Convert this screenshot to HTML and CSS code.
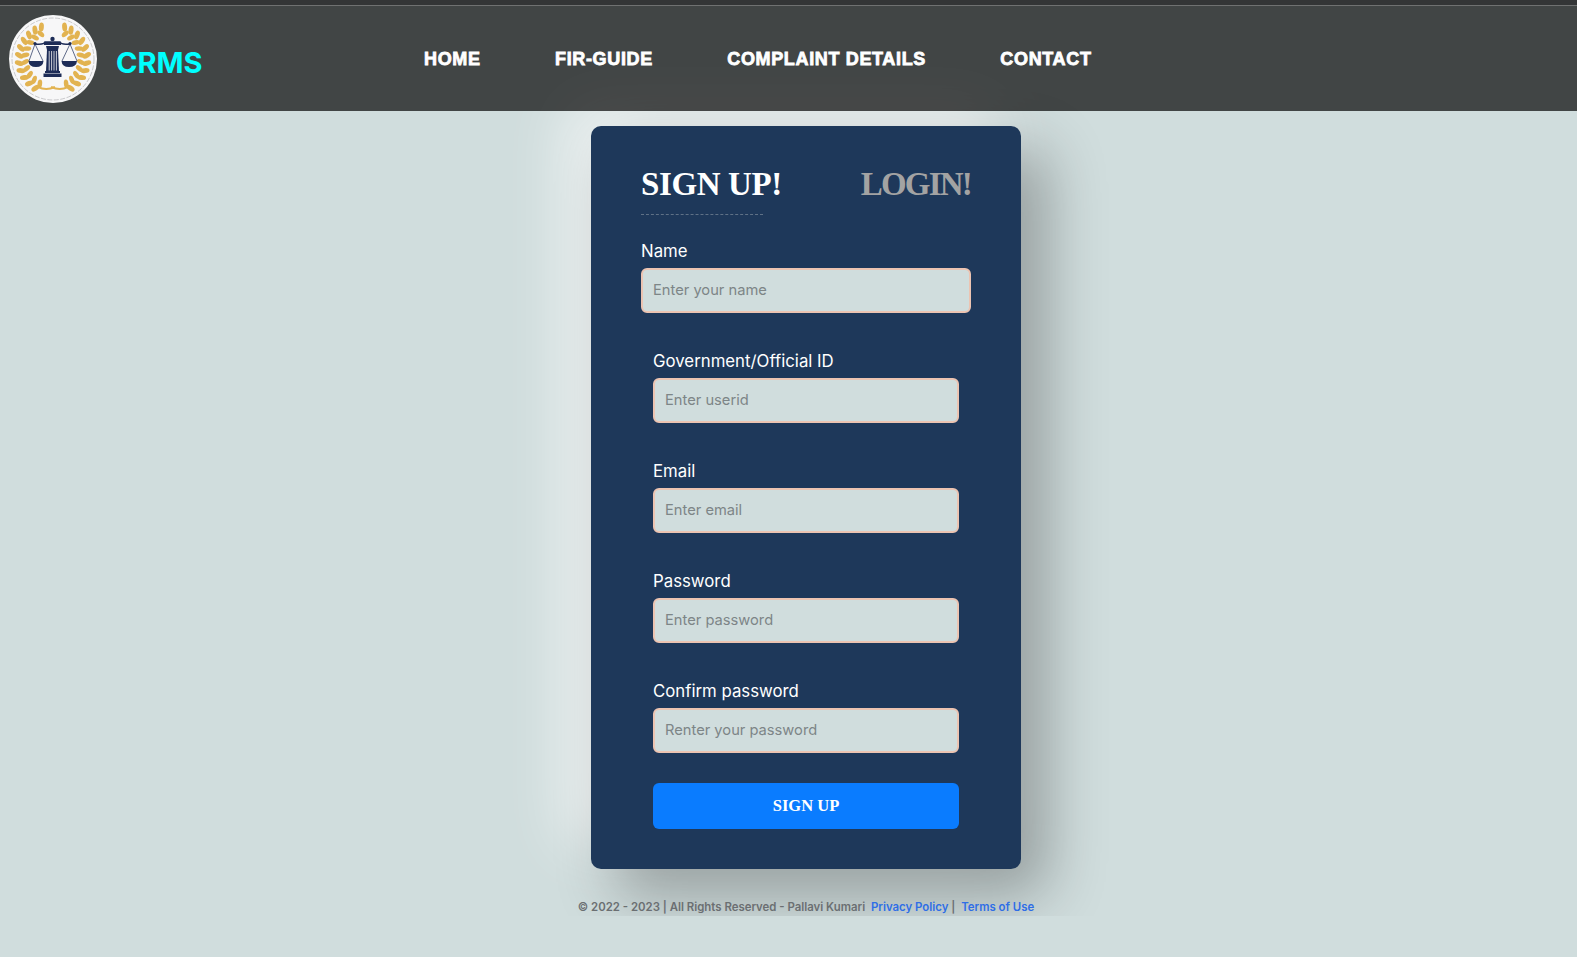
FILE: index.html
```html
<!DOCTYPE html>
<html lang="en">
<head>
<meta charset="utf-8">
<title>CRMS - Sign Up</title>
<link rel="stylesheet" href="styles.css">
</head>
<body>
<div class="top-strip"></div>
<header class="site-header">
  <a class="brand" href="#">
    <svg class="logo" viewBox="0 0 88 88" width="88" height="88" aria-label="CRMS logo">
      <defs>
        <g id="half-wreath" fill="#e2b351">
          <g>
            <ellipse cx="44" cy="10" rx="2.5" ry="4.6" transform="rotate(-20 44 44) rotate(25 44 10)"/>
            <ellipse cx="44" cy="10" rx="2.5" ry="4.6" transform="rotate(-32 44 44) rotate(25 44 10)"/>
            <ellipse cx="44" cy="10" rx="2.5" ry="4.6" transform="rotate(-45 44 44) rotate(25 44 10)"/>
            <ellipse cx="44" cy="10" rx="2.5" ry="4.6" transform="rotate(-58 44 44) rotate(25 44 10)"/>
            <ellipse cx="44" cy="10" rx="2.5" ry="4.6" transform="rotate(-71 44 44) rotate(25 44 10)"/>
            <ellipse cx="44" cy="10" rx="2.5" ry="4.6" transform="rotate(-84 44 44) rotate(25 44 10)"/>
            <ellipse cx="44" cy="10" rx="2.5" ry="4.6" transform="rotate(-97 44 44) rotate(25 44 10)"/>
            <ellipse cx="44" cy="10" rx="2.5" ry="4.6" transform="rotate(-110 44 44) rotate(25 44 10)"/>
            <ellipse cx="44" cy="10" rx="2.5" ry="4.6" transform="rotate(-123 44 44) rotate(25 44 10)"/>
            <ellipse cx="44" cy="10" rx="2.5" ry="4.6" transform="rotate(-136 44 44) rotate(25 44 10)"/>
            <ellipse cx="44" cy="10" rx="2.5" ry="4.6" transform="rotate(-149 44 44) rotate(25 44 10)"/>
          </g>
          <g>
            <ellipse cx="44" cy="16" rx="2.3" ry="4.2" transform="rotate(-26 44 44) rotate(-22 44 16)"/>
            <ellipse cx="44" cy="16" rx="2.3" ry="4.2" transform="rotate(-40 44 44) rotate(-22 44 16)"/>
            <ellipse cx="44" cy="16" rx="2.3" ry="4.2" transform="rotate(-54 44 44) rotate(-22 44 16)"/>
            <ellipse cx="44" cy="16" rx="2.3" ry="4.2" transform="rotate(-68 44 44) rotate(-22 44 16)"/>
            <ellipse cx="44" cy="16" rx="2.3" ry="4.2" transform="rotate(-82 44 44) rotate(-22 44 16)"/>
            <ellipse cx="44" cy="16" rx="2.3" ry="4.2" transform="rotate(-96 44 44) rotate(-22 44 16)"/>
            <ellipse cx="44" cy="16" rx="2.3" ry="4.2" transform="rotate(-110 44 44) rotate(-22 44 16)"/>
            <ellipse cx="44" cy="16" rx="2.3" ry="4.2" transform="rotate(-124 44 44) rotate(-22 44 16)"/>
            <ellipse cx="44" cy="16" rx="2.3" ry="4.2" transform="rotate(-138 44 44) rotate(-22 44 16)"/>
            <ellipse cx="44" cy="16" rx="2.3" ry="4.2" transform="rotate(-152 44 44) rotate(-22 44 16)"/>
          </g>
          <path d="M46 72 Q37 76 29 72" fill="none" stroke="#e2b351" stroke-width="2"/>
        </g>
      </defs>
      <circle cx="44" cy="44" r="44" fill="#f7f7f8"/>
      <circle cx="44" cy="44" r="41" fill="none" stroke="#a9a9ad" stroke-width=".6" stroke-dasharray="5 1.5"/>
      <use href="#half-wreath"/>
      <use href="#half-wreath" transform="matrix(-1 0 0 1 88 0)"/>
      <g fill="#1d2c57" stroke="#1d2c57">
        <path d="M26 29 Q35 30 36 27 H51 Q52 30 61 29" fill="none" stroke-width="1.6"/>
        <circle cx="43.5" cy="24" r="2.2" stroke="none"/>
        <circle cx="26" cy="28.5" r="1.6" stroke="none"/>
        <circle cx="61" cy="28.5" r="1.6" stroke="none"/>
        <path d="M35 27 H52 V30 H35 Z" stroke="none"/>
        <path d="M37 31 H50 L49 35 H38 Z" stroke="none"/>
        <path d="M38 35 H49 L50 56 H37 Z" stroke="none"/>
        <path d="M36 56 H51 V58 H36 Z M34.5 58.5 H52.5 V62 H34.5 Z" stroke="none"/>
        <path d="M26 29 L20 46 M26 29 L34 46 M61 29 L53 46 M61 29 L68 46" fill="none" stroke-width=".7"/>
        <path d="M19.5 46 H34.5 Q34 52 27 52 Q20 52 19.5 46 Z M52.5 46 H68 Q67.5 52 60 52 Q53 52 52.5 46 Z" stroke="none"/>
      </g>
      <g stroke="#f7f7f8" stroke-width=".8">
        <path d="M40.2 36 V55.5 M42.6 36 V55.5 M45 36 V55.5 M47.4 36 V55.5"/>
      </g>
    </svg>
    <span class="brand-name">CRMS</span>
  </a>
  <nav class="main-nav">
    <a href="#">HOME</a>
    <a href="#">FIR-GUIDE</a>
    <a href="#">COMPLAINT DETAILS</a>
    <a href="#">CONTACT</a>
  </nav>
</header>
<main class="page-main">
  <form class="auth-card">
    <div class="tabs">
      <h2 class="tab tab-active">SIGN UP!</h2>
      <h2 class="tab tab-muted">LOGIN!</h2>
    </div>
    <div class="tab-rule"></div>
    <div class="field">
      <label class="field-label" for="name">Name</label>
      <input class="field-input" id="name" type="text" placeholder="Enter your name">
    </div>
    <div class="field field-inset">
      <label class="field-label" for="userid">Government/Official ID</label>
      <input class="field-input" id="userid" type="text" placeholder="Enter userid">
    </div>
    <div class="field field-inset">
      <label class="field-label" for="email">Email</label>
      <input class="field-input" id="email" type="text" placeholder="Enter email">
    </div>
    <div class="field field-inset">
      <label class="field-label" for="password">Password</label>
      <input class="field-input" id="password" type="password" placeholder="Enter password">
    </div>
    <div class="field field-inset">
      <label class="field-label" for="confirm">Confirm password</label>
      <input class="field-input" id="confirm" type="password" placeholder="Renter your password">
    </div>
    <button class="submit-btn" type="button">SIGN UP</button>
  </form>
  <p class="legal">© 2022 - 2023 | All Rights Reserved - Pallavi Kumari <a href="#">Privacy Policy</a> | <a href="#">Terms of Use</a></p>
</main>
<div class="page-end"></div>
</body>
</html>
```
FILE: styles.css
```css
* { box-sizing: border-box; }
html, body { height: 100%; }
body {
  margin: 0;
  display: flex;
  flex-direction: column;
  overflow: hidden;
  background: #d0dddd;
  font-family: Inter, "Noto Sans", "Liberation Sans", sans-serif;
}
a { text-decoration: none; }

.top-strip { height: 5px; background: #333536; flex: none; position: relative; z-index: 3; }

.site-header {
  position: relative;
  z-index: 2;
  flex: none;
  height: 106px;
  display: flex;
  align-items: flex-start;
  background: rgba(0, 0, 0, .69);
  border-top: 1px solid #6f7171;
  padding: 9px 0 0 9px;
}
.brand { display: flex; align-items: center; width: 415px; flex: none; }
.logo { display: block; flex: none; }
.brand-name {
  margin: 7px 0 0 19px;
  color: #00ffff;
  font-size: 29px;
  font-weight: 700;
  line-height: 36px;
}
.main-nav { display: flex; gap: 74.4px; margin-top: 32px; }
.main-nav a {
  color: #fff;
  font-family: "Liberation Sans", Arial, sans-serif;
  font-weight: 700;
  font-size: 18px;
  line-height: 24px;
  letter-spacing: .65px;
  -webkit-text-stroke: .8px #fff;
}

.page-main {
  flex: none;
  height: 805px;
  display: flex;
  flex-direction: column;
  align-items: center;
  padding: 15px 0 0 35px;
}
.auth-card {
  width: 430px;
  height: 743px;
  flex: none;
  background: #1e385a;
  border-radius: 10px;
  padding: 40px 50px;
  box-shadow: 25px 25px 60px rgba(0, 0, 0, .3), -25px -25px 60px rgba(255, 255, 255, .7);
}
.tabs { display: flex; justify-content: space-between; align-items: center; height: 36px; }
.tab {
  margin: 0;
  font-family: "Liberation Serif", "Times New Roman", serif;
  font-size: 33px;
  font-weight: 700;
  line-height: 36px;
  letter-spacing: -.4px;
}
.tab-active { color: #fff; }
.tab-muted { color: #a3a3a3; letter-spacing: -1.8px; }
.tab-rule { width: 122px; height: 0; margin-top: 12px; border-top: 1px dashed #5f7186; }

.field { margin-top: 36px; }
.tab-rule + .field { margin-top: 24px; }
.field-inset { padding: 0 12px; }
.field-label {
  display: block;
  color: #fff;
  font-size: 16.8px;
  line-height: 24px;
  margin-bottom: 5px;
}
.field-input {
  display: block;
  width: 100%;
  height: 45px;
  padding: 0 10px 2px;
  background: #d0dddd;
  border: 2px solid #ecc4b2;
  border-radius: 6px;
  font-family: inherit;
  font-size: 14.7px;
  color: #333;
  outline: none;
}
.field-input::placeholder { color: #7d8587; opacity: 1; }

.submit-btn {
  display: block;
  width: 306px;
  height: 46px;
  margin: 30px 12px 0;
  border: 0;
  border-radius: 6px;
  background: #0a7cff;
  color: #fff;
  font-family: "Liberation Serif", "Times New Roman", serif;
  font-size: 16.5px;
  font-weight: 700;
}

.legal {
  margin: 29px 0 0;
  color: #6b6f72;
  font-size: 11.4px;
  font-weight: 600;
  line-height: 18px;
  white-space: nowrap;
}
.legal a { color: #2f6ee6; margin-left: 3px; }

.page-end {
  position: relative;
  z-index: 1;
  flex: 1;
  background: #d0dddd;
}
```
